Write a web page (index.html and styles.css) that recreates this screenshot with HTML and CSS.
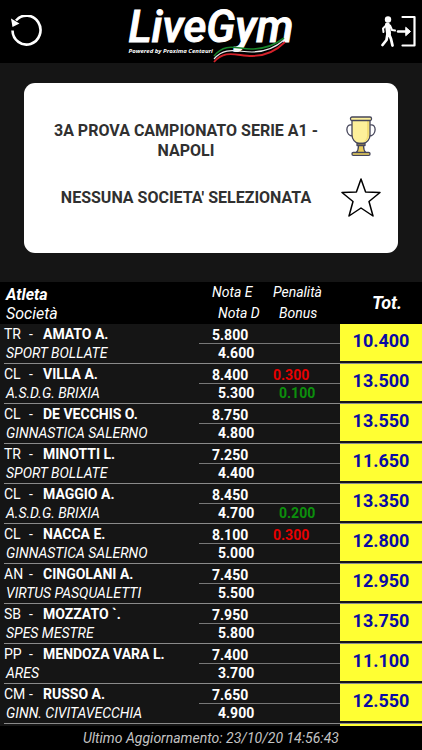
FILE: index.html
```html
<!DOCTYPE html>
<html lang="it">
<head>
  <meta charset="UTF-8">
  <meta name="viewport" content="width=device-width, initial-scale=1">
  <title>LiveGym</title>
  <link rel="stylesheet" href="styles.css">
</head>
<body>
  <header class="topbar">
    <button type="button" class="icon-btn" aria-label="Aggiorna">
      <svg width="34" height="34" viewBox="0 0 34 34">
        <path d="M4.500 15.500A14 14.500 0 1 0 8 5.500" fill="none" stroke="#fff" stroke-width="2.600"/>
        <path d="M3 3.500L4.500 12L11.500 8.500Z" fill="#fff"/>
      </svg>
    </button>
    <div class="logo">
      <h1 class="logo-name">LiveGym</h1>
      <p class="logo-sub">Powered by Proxima Centauri</p>
      <svg class="logo-wave" width="74" height="26" viewBox="0 0 74 26" fill="none">
        <path d="M1 19C12 5 24 12 38 12C52 12 62 8 71 1" stroke="#17852b" stroke-width="1.600"/>
        <path d="M1 22C12 9 24 15 39 15C53 15 63 10 71 3" stroke="#eee" stroke-width="1.200"/>
        <path d="M1 25C12 12 24 19 39 19C54 19 64 13 72 5" stroke="#d4222a" stroke-width="1.800"/>
      </svg>
    </div>
    <button type="button" class="icon-btn" aria-label="Esci">
      <svg width="36" height="34" viewBox="0 0 36 34" fill="none" stroke="#fff" stroke-linecap="round" stroke-linejoin="round">
        <circle cx="8" cy="4.500" r="3.200" fill="#fff" stroke="none"/>
        <path d="M7.500 10L8.500 18" stroke-width="5"/>
        <path d="M6 10.500L3 13.500L3.500 17M10 10.500L12 15L15 15.500" stroke-width="2"/>
        <path d="M7.500 19L6.500 25L2.500 30M9 19L11 24L12.500 30.500" stroke-width="2.800"/>
        <path d="M18 16.500H26" stroke-width="2.400"/>
        <path d="M26 12.500L30.500 16.500L26 20.500Z" fill="#fff" stroke-width="1"/>
        <path d="M22.500 2H34.500V30.500H22.500" stroke-width="2.200"/>
      </svg>
    </button>
  </header>

  <section class="card">
    <p class="card-text">3A PROVA CAMPIONATO SERIE A1 - NAPOLI</p>
    <button type="button" class="icon-btn" aria-label="Scegli gara">
      <svg width="40" height="40" viewBox="0 0 40 40" stroke="#45455a" stroke-width="1.300" stroke-linejoin="round">
        <path d="M11 9C4 7 4 20 12 20M29 9C36 7 36 20 28 20" fill="none"/>
        <path d="M11 4V19C11 23 14 27 18 27.500H22C26 27 29 23 29 19V4Z" fill="#fdf09a"/>
        <path d="M26 5V20C26 23 24 25 22 26C26 25 28 22 28 19V5Z" fill="#f2dd75" stroke="none"/>
        <rect x="9.500" y="1" width="21" height="3.500" rx="1.500" fill="#fdf09a"/>
        <path d="M16 27.500H24V29.500H16Z" fill="#d6b94d"/>
        <path d="M17.500 29.500H22.500C22.500 33 23 35 25 37H15C17 35 17.500 33 17.500 29.500Z" fill="#e9cc58"/>
        <rect x="11" y="36.500" width="18" height="2.800" rx="1.200" fill="#f0d65e"/>
      </svg>
    </button>
    <p class="card-text">NESSUNA SOCIETA' SELEZIONATA</p>
    <button type="button" class="icon-btn" aria-label="Scegli società">
      <svg width="40" height="40" viewBox="0 0 40 40">
        <path d="M20 1L24.600 14L39 14.500L28 23.500L32 38L20 30L8 38L12 23.500L1 14.500L15.400 14Z" fill="none" stroke="#000" stroke-width="1.500" stroke-linejoin="round"/>
      </svg>
    </button>
  </section>

  <main class="results">
    <table class="score-table">
      <thead>
        <tr>
          <th class="col-athlete"><b class="head-name">Atleta</b><span class="head-club">Società</span></th>
          <th class="col-nota"><span class="top">Nota E</span><span class="low">Nota D</span></th>
          <th class="col-extra"><span class="top">Penalità</span><span class="low">Bonus</span></th>
          <th class="col-total">Tot.</th>
        </tr>
      </thead>
      <tbody id="scores"></tbody>
    </table>
  </main>

  <footer class="status">Ultimo Aggiornamento: 23/10/20 14:56:43</footer>

  <script src="scores.js"></script>
</body>
</html>
```
FILE: styles.css
```css
* {
  box-sizing: border-box;
}
body {
  margin: 0;
  height: 100vh;
  display: flex;
  flex-direction: column;
  background: #151515;
  color: #fff;
  font-family: Roboto, "Liberation Sans", sans-serif;
}
p, h1 {
  margin: 0;
}
.icon-btn {
  padding: 0;
  border: none;
  background: none;
  cursor: pointer;
}
.icon-btn svg {
  display: block;
}

/* header */
.topbar {
  flex: none;
  height: 63px;
  padding: 0 6px 0 8px;
  display: flex;
  align-items: center;
  justify-content: space-between;
  background: #000;
}
.logo {
  position: relative;
  height: 63px;
  padding-top: 4px;
}
.logo-name {
  font: italic 500 44px/46px Roboto, sans-serif;
  height: 43px;
  -webkit-text-stroke: 1px #fff;
}
.logo-sub {
  font: italic bold 6px/8px "Open Sans", sans-serif;
}
.logo-wave {
  position: absolute;
  left: 84px;
  bottom: 0;
}

/* card */
.card {
  flex: none;
  margin: 20px 24px 29px;
  padding: 28px 17px 35px 20px;
  display: grid;
  grid-template-columns: 1fr 40px;
  grid-template-rows: 50px 40px;
  gap: 17px 13px;
  align-items: center;
  background: #fff;
  border-radius: 11px;
}
.card-text {
  color: #303030;
  font-size: 16px;
  font-weight: bold;
  line-height: 20px;
  text-align: center;
}
.card-text:first-child {
  align-self: end;
}

/* scores */
.results {
  flex: 1;
  min-height: 0;
  padding-left: 4px;
  overflow: hidden;
}
.score-table {
  width: 100%;
  table-layout: fixed;
  border-collapse: separate;
  border-spacing: 0;
}
th, td {
  padding: 0;
  text-align: left;
  vertical-align: top;
  white-space: nowrap;
}
th {
  height: 42px;
  background: #000;
  font-size: 14px;
  font-style: italic;
  font-weight: normal;
}
th span, th b {
  display: block;
  line-height: 21px;
}
.col-athlete {
  padding-left: 2px;
  font-size: 16px;
  box-shadow: -4px 0 0 #000;
}
.head-name {
  padding-top: 2px;
}
.head-club {
  line-height: 18px;
}
.col-nota {
  width: 61px;
}
.col-extra {
  width: 80px;
}
.col-total {
  width: 82px;
  padding-left: 12px;
  font-size: 18px;
  font-weight: bold;
  line-height: 20px;
  text-align: center;
  vertical-align: middle;
}
.top, .low {
  display: block;
  padding-left: 13px;
}
.low {
  padding-left: 19px;
}
td {
  height: 40px;
  border-bottom: 1px solid #8a8a8a;
  font-size: 14px;
}
.name {
  display: flex;
  font-size: 14px;
  line-height: 20px;
}
.code {
  width: 25px;
}
.dash {
  width: 14px;
}
.club {
  padding-left: 2px;
  font-size: 14px;
  font-style: italic;
  line-height: 18px;
}
td .top, td .low {
  height: 20px;
  font-weight: bold;
  line-height: 22px;
}
td .top {
  border-bottom: 1px solid #777;
}
td .low {
  height: 19px;
  line-height: 18px;
}
.penalty {
  color: #e60000;
}
.bonus {
  color: #0c8f0c;
}
.total {
  height: 37px;
  background: #ffff33;
  color: #0a0aa4;
  font-size: 18px;
  font-weight: bold;
  line-height: 34px;
  text-align: center;
}

/* footer */
.status {
  flex: none;
  background: #000;
  color: #c4c4c4;
  font-size: 14px;
  font-style: italic;
  line-height: 24px;
  text-align: center;
}
```
FILE: scores.js
```js
// codice, atleta, società, nota E, nota D, penalità, bonus, totale
const scores = [
  ['TR', 'AMATO A.', 'SPORT BOLLATE', '5.800', '4.600', '', '', '10.400'],
  ['CL', 'VILLA A.', 'A.S.D.G. BRIXIA', '8.400', '5.300', '0.300', '0.100', '13.500'],
  ['CL', 'DE VECCHIS O.', 'GINNASTICA SALERNO', '8.750', '4.800', '', '', '13.550'],
  ['TR', 'MINOTTI L.', 'SPORT BOLLATE', '7.250', '4.400', '', '', '11.650'],
  ['CL', 'MAGGIO A.', 'A.S.D.G. BRIXIA', '8.450', '4.700', '', '0.200', '13.350'],
  ['CL', 'NACCA E.', 'GINNASTICA SALERNO', '8.100', '5.000', '0.300', '', '12.800'],
  ['AN', 'CINGOLANI A.', 'VIRTUS PASQUALETTI', '7.450', '5.500', '', '', '12.950'],
  ['SB', 'MOZZATO `.', 'SPES MESTRE', '7.950', '5.800', '', '', '13.750'],
  ['PP', 'MENDOZA VARA L.', 'ARES', '7.400', '3.700', '', '', '11.100'],
  ['CM', 'RUSSO A.', 'GINN. CIVITAVECCHIA', '7.650', '4.900', '', '', '12.550'],
  ['', '', '', '', '', '', '', '']
];

document.getElementById('scores').innerHTML = scores.map(function(s) {
  return `<tr>
    <td><div class="name"><span class="code">${s[0]}</span><span class="dash">${s[0] ? '-' : ''}</span><b>${s[1]}</b></div><div class="club">${s[2]}</div></td>
    <td><div class="top">${s[3]}</div><div class="low">${s[4]}</div></td>
    <td><div class="top penalty">${s[5]}</div><div class="low bonus">${s[6]}</div></td>
    <td><div class="total">${s[7]}</div></td>
  </tr>`;
}).join('');
```
